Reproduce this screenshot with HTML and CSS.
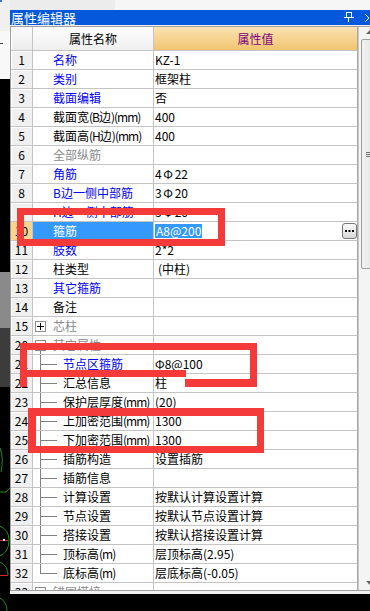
FILE: index.html
```html
<!DOCTYPE html>
<html lang="zh-CN">
<head>
<meta charset="utf-8">
<title>属性编辑器</title>
<link rel="stylesheet" href="styles.css">
</head>
<body>
<div class="screen">
  <svg class="side" width="10" height="611" viewBox="0 0 10 611">
    <rect x="0" y="0" width="10" height="611" fill="#f0f0f0"/>
    <rect x="0" y="0" width="2" height="2" fill="#3a6fd0"/>
    <rect x="0" y="31" width="10" height="48" fill="#f8f8f8"/>
    <rect x="0" y="43" width="3" height="1" fill="#404040"/>
    <rect x="0" y="79" width="10" height="193" fill="#000"/>
    <rect x="0" y="272" width="10" height="56" fill="#8a8a8a"/>
    <rect x="0" y="328" width="10" height="59" fill="#3c3c3c"/>
    <rect x="0" y="387" width="10" height="224" fill="#000"/>
    <path d="M0 448 Q4 458 1 472" stroke="#1c8c1c" fill="none"/>
    <path d="M0 492 H6 L10 488" stroke="#1c8c1c" fill="none"/>
    <path d="M0 526 Q9 530 9 540 Q9 552 0 556" stroke="#1c8c1c" fill="none"/>
    <rect x="0" y="540" width="8" height="1" fill="#e02020"/>
    <rect x="3" y="539" width="2" height="2" fill="#fff"/>
    <path d="M0 562 Q8 566 8 575" stroke="#1c8c1c" fill="none"/>
    <rect x="0" y="575" width="8" height="1" fill="#e02020"/>
    <path d="M0 598 Q7 602 7 611" stroke="#1c8c1c" fill="none"/>
  </svg>
  <div class="main">
    <div class="topstrip"></div>
    <div class="titlebar">
      <span class="title">属性编辑器</span>
      <svg class="pin" width="10" height="11" viewBox="0 0 10 11">
        <rect x="2.5" y="0.5" width="5" height="5" fill="none" stroke="#fff"/>
        <rect x="0" y="5" width="10" height="1" fill="#fff"/>
        <rect x="4" y="6" width="1" height="4" fill="#fff"/>
      </svg>
      <svg class="chev" width="5" height="8" viewBox="0 0 5 8">
        <polyline points="0.5,0.5 4,4 0.5,7.5" fill="none" stroke="#fff"/>
      </svg>
    </div>
    <div class="gap"></div>
    <div class="frame">
      <div class="grid">
        <div class="row head">
          <div class="num"></div>
          <div class="name">属性名称</div>
          <div class="val">属性值</div>
        </div>
        <div class="row"><div class="num">1</div><div class="name blue">名称</div><div class="val">KZ-1</div></div>
        <div class="row"><div class="num">2</div><div class="name blue">类别</div><div class="val">框架柱</div></div>
        <div class="row"><div class="num">3</div><div class="name blue">截面编辑</div><div class="val">否</div></div>
        <div class="row"><div class="num">4</div><div class="name">截面宽<span class="u">(B</span>边<span class="u">)(mm)</span></div><div class="val">400</div></div>
        <div class="row"><div class="num">5</div><div class="name">截面高<span class="u">(H</span>边<span class="u">)(mm)</span></div><div class="val">400</div></div>
        <div class="row"><div class="num">6</div><div class="name gray">全部纵筋</div><div class="val"></div></div>
        <div class="row"><div class="num">7</div><div class="name blue">角筋</div><div class="val">4<span class="bar">Φ</span>22</div></div>
        <div class="row"><div class="num">8</div><div class="name blue">B边一侧中部筋</div><div class="val">3<span class="bar">Φ</span>20</div></div>
        <div class="row"><div class="num">9</div><div class="name blue">H边一侧中部筋</div><div class="val">3<span class="bar">Φ</span>20</div></div>
        <div class="row sel"><div class="num">10</div><div class="name">箍筋</div><div class="val"><span class="hl">A8@200</span><span class="more"><svg width="9" height="3" viewBox="0 0 9 3"><rect x="0" y="0" width="2" height="2"/><rect x="3.5" y="0" width="2" height="2"/><rect x="7" y="0" width="2" height="2"/></svg></span></div></div>
        <div class="row"><div class="num">11</div><div class="name blue">肢数</div><div class="val">2*2</div></div>
        <div class="row"><div class="num">12</div><div class="name">柱类型</div><div class="val"><span class="ind">(中柱)</span></div></div>
        <div class="row"><div class="num">13</div><div class="name blue">其它箍筋</div><div class="val"></div></div>
        <div class="row"><div class="num">14</div><div class="name">备注</div><div class="val"></div></div>
        <div class="row"><div class="num">15</div><div class="name node gray"><span class="box plus"></span>芯柱</div><div class="val"></div></div>
        <div class="row"><div class="num">20</div><div class="name node open gray"><span class="box minus"></span>其它属性</div><div class="val"></div></div>
        <div class="row"><div class="num">21</div><div class="name branch blue">节点区箍筋</div><div class="val">Φ8@100</div></div>
        <div class="row"><div class="num">22</div><div class="name branch">汇总信息</div><div class="val">柱</div></div>
        <div class="row"><div class="num">23</div><div class="name branch">保护层厚度<span class="u">(mm)</span></div><div class="val">(20)</div></div>
        <div class="row"><div class="num">24</div><div class="name branch">上加密范围<span class="u">(mm)</span></div><div class="val">1300</div></div>
        <div class="row"><div class="num">25</div><div class="name branch">下加密范围<span class="u">(mm)</span></div><div class="val">1300</div></div>
        <div class="row"><div class="num">26</div><div class="name branch">插筋构造</div><div class="val">设置插筋</div></div>
        <div class="row"><div class="num">27</div><div class="name branch">插筋信息</div><div class="val"></div></div>
        <div class="row"><div class="num">28</div><div class="name branch">计算设置</div><div class="val">按默认计算设置计算</div></div>
        <div class="row"><div class="num">29</div><div class="name branch">节点设置</div><div class="val">按默认节点设置计算</div></div>
        <div class="row"><div class="num">30</div><div class="name branch">搭接设置</div><div class="val">按默认搭接设置计算</div></div>
        <div class="row"><div class="num">31</div><div class="name branch">顶标高<span class="u">(m)</span></div><div class="val">层顶标高(2.95)</div></div>
        <div class="row"><div class="num">32</div><div class="name branch last">底标高<span class="u">(m)</span></div><div class="val">层底标高(-0.05)</div></div>
        <div class="row"><div class="num">33</div><div class="name node gray"><span class="box minus"></span>锚固搭接</div><div class="val"></div></div>
      </div>
      <div class="scroll">
        <div class="sb">
          <div class="arrow up"></div>
          <div class="thumb"><span></span><span></span><span></span></div>
          <div class="track"></div>
          <div class="arrow down"></div>
        </div>
      </div>
    </div>
    <div class="after"></div>
    <div class="black"></div>
  </div>
  <svg class="marks" width="370" height="611" viewBox="0 0 370 611">
    <g fill="#f53a3a">
      <rect x="17" y="208" width="208" height="7"/>
      <rect x="17" y="208" width="7" height="38"/>
      <rect x="17" y="239" width="208" height="7"/>
      <rect x="218" y="208" width="7" height="38"/>

      <rect x="20" y="343" width="237" height="7"/>
      <rect x="20" y="343" width="7" height="44"/>
      <rect x="20" y="370" width="166" height="7"/>
      <rect x="250" y="343" width="7" height="44"/>
      <rect x="185" y="379" width="72" height="8"/>

      <rect x="28" y="408" width="236" height="8"/>
      <rect x="28" y="408" width="8" height="45"/>
      <rect x="28" y="446" width="236" height="7"/>
      <rect x="257" y="408" width="7" height="45"/>
    </g>
  </svg>
</div>
</body>
</html>
```

FILE: styles.css
```css
* {
  box-sizing: border-box;
  margin: 0;
  padding: 0;
}

html,
body {
  width: 370px;
  height: 611px;
  overflow: hidden;
  background: #f0f0f0;
  font-family: "Noto Sans CJK SC", "Noto Sans", sans-serif;
  font-size: 12px;
  color: #000;
}

.screen {
  position: relative;
  display: flex;
  width: 370px;
  height: 611px;
}

.side {
  display: block;
  flex: none;
}

.main {
  width: 360px;
  display: flex;
  flex-direction: column;
}

.topstrip {
  height: 10px;
  background: linear-gradient(90deg, #ececec 0, #ececec 105px, #f6f6f6 105px);
}

.titlebar {
  height: 15px;
  background: #0358dc;
  color: #fff;
  display: flex;
  align-items: center;
  font-size: 13px;
  line-height: 15px;
}

.title {
  flex: 1;
  padding-left: 1px;
}

.pin {
  display: block;
  margin-right: 11px;
}

.chev {
  display: block;
  width: 5px;
}

.gap {
  height: 1px;
}

.frame {
  height: 565px;
  border-top: 1px solid #a0a0a0;
  border-bottom: 1px solid #a0a0a0;
  border-left: 1px solid #a0a0a0;
  display: flex;
  background: #fff;
}

.grid {
  width: 347px;
  flex: none;
  overflow: hidden;
}

.row {
  display: grid;
  grid-template-columns: 22px 121px 204px;
  height: 19px;
}

.row > div {
  border-right: 1px solid #c4c4c4;
  border-bottom: 1px solid #c4c4c4;
  line-height: 18px;
  white-space: nowrap;
  overflow: hidden;
}

.num {
  background: #f0f0f0;
  text-align: center;
  box-shadow: inset 1px 1px 0 #fff;
}

.name {
  padding-left: 20px;
}

.val {
  padding-left: 1px;
}

.row > .val {
  border-right-color: #a8a8a8;
}

.u {
  letter-spacing: -1px;
}

.blue {
  color: #0000ff;
}

.gray {
  color: #8a8a8a;
}

.bar {
  display: inline-block;
  width: 13px;
  text-align: center;
}

.ind {
  padding-left: 3px;
}

/* header */
.head {
  height: 24px;
}

.head > div {
  line-height: 23px;
}

.head .num {
  background: linear-gradient(#fcfcfc, #ebebeb);
}

.head .name {
  padding: 0;
  text-align: center;
  background: linear-gradient(#fefefe, #efefef);
}

.head .val {
  padding: 0;
  text-align: center;
  color: #800080;
  background: linear-gradient(#fbe3b3, #f1c46f);
}

/* selected row */
.sel .num {
  background: #fdd48e;
  box-shadow: none;
}

.sel .name {
  background: #3399ff;
  color: #fff;
}

.sel .val {
  display: flex;
  align-items: center;
  justify-content: space-between;
}

.hl {
  background: #3399ff;
  color: #fff;
  line-height: 14px;
  padding: 0 1px;
}

.more {
  width: 15px;
  height: 16px;
  border: 1px solid #777;
  border-radius: 3px;
  background: linear-gradient(#fbfbfb, #d9d9d9);
  display: flex;
  align-items: center;
  justify-content: center;
}

.more svg {
  display: block;
  fill: #000;
}

/* tree */
.node {
  display: flex;
  align-items: center;
  padding-left: 2px;
}

.box {
  flex: none;
  width: 11px;
  height: 11px;
  margin-right: 7px;
  border: 1px solid #8e8e8e;
  background-color: #fff;
  background-repeat: no-repeat;
  background-position: center;
}

.plus {
  background-image: linear-gradient(#000, #000), linear-gradient(#000, #000);
  background-size: 7px 1px, 1px 7px;
}

.minus {
  background-image: linear-gradient(#777, #777);
  background-size: 7px 1px;
}

.open {
  background: linear-gradient(#808080, #808080) 7px 15px / 1px 4px no-repeat;
}

.branch {
  padding-left: 30px;
  background:
    linear-gradient(#808080, #808080) 7px 0 / 1px 100% no-repeat,
    linear-gradient(#808080, #808080) 7px 9px / 17px 1px no-repeat;
}

.branch.last {
  background:
    linear-gradient(#808080, #808080) 7px 0 / 1px 10px no-repeat,
    linear-gradient(#808080, #808080) 7px 9px / 17px 1px no-repeat;
}

/* scrollbar */
.scroll {
  width: 12px;
  flex: none;
  overflow: hidden;
  border-left: 1px solid #c8c8c8;
  background: #f4f4f4;
  padding-left: 1px;
}

.sb {
  width: 17px;
  height: 100%;
  display: flex;
  flex-direction: column;
}

.arrow {
  height: 12px;
  flex: none;
  position: relative;
}

.arrow::after {
  content: "";
  position: absolute;
  left: 6px;
  border-left: 4px solid transparent;
  border-right: 4px solid transparent;
}

.up::after {
  top: 3px;
  border-bottom: 4px solid #606060;
}

.down::after {
  top: 3px;
  border-top: 4px solid #606060;
}

.thumb {
  height: 230px;
  flex: none;
  border: 1px solid #9e9e9e;
  border-radius: 2px;
  background: linear-gradient(90deg, #f2f2f2, #e2e2e2);
  margin-left: 1px;
  display: flex;
  flex-direction: column;
  justify-content: center;
  align-items: center;
  gap: 1px;
}

.thumb span {
  display: block;
  width: 7px;
  height: 1px;
  background: #707070;
}

.track {
  flex: 1;
}

.after {
  height: 3px;
}

.black {
  height: 17px;
  background: #000;
}

.marks {
  position: absolute;
  left: 0;
  top: 0;
  pointer-events: none;
}
```
